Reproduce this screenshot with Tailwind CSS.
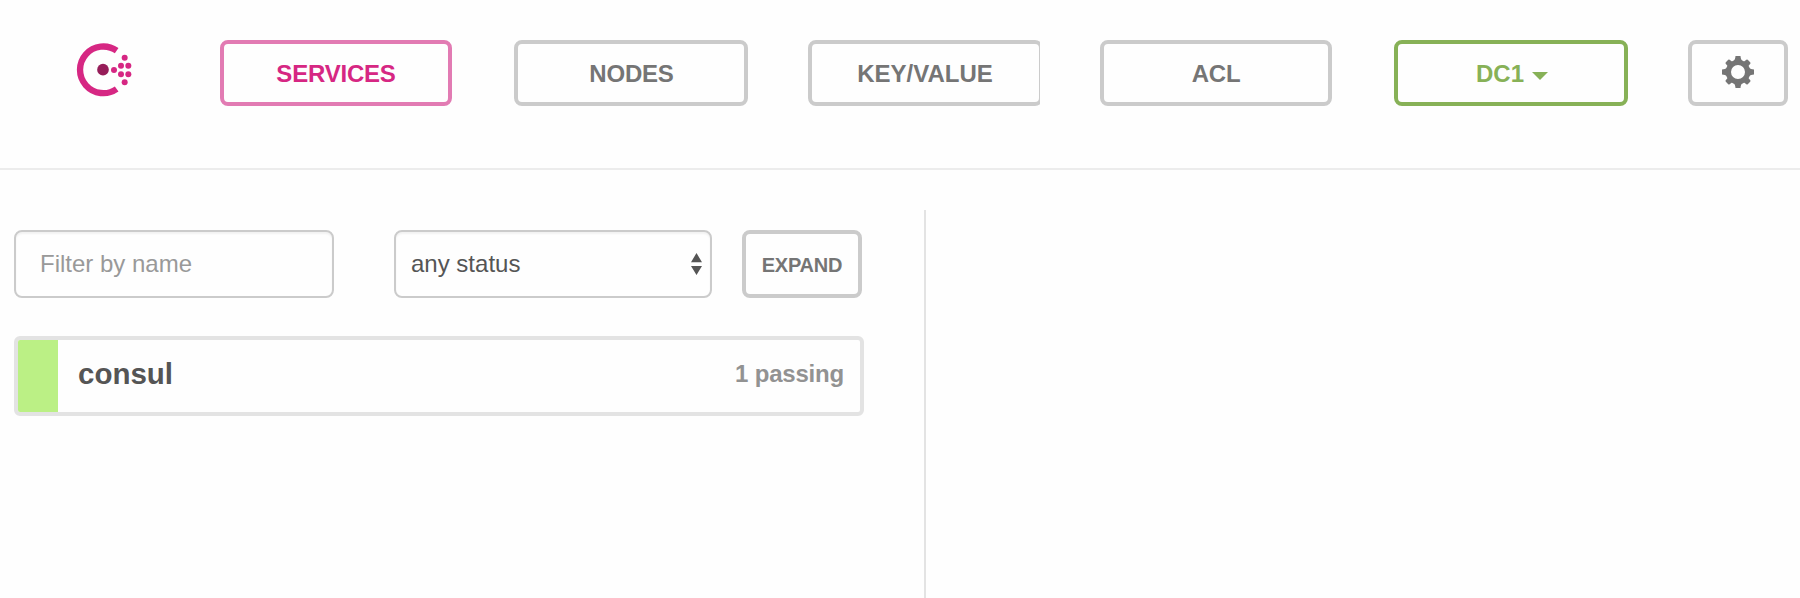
<!DOCTYPE html>
<html lang="en">
<head>
<meta charset="utf-8">
<title>Consul</title>
<script src="https://cdn.jsdelivr.net/npm/@tailwindcss/browser@4"></script>
</head>
<body class="h-[598px] overflow-hidden bg-[#fefefe] font-['Liberation_Sans',Arial,sans-serif] text-2xl text-[#555]">
<header class="flex h-[170px] items-start border-b-2 border-[#ececec] pt-10 font-bold text-[#757575]">
  <svg class="ml-[60px] -mt-[10px] mr-[70px] h-20 w-[90px] shrink-0" viewBox="0 0 270 240">
    <path d="M171 62A70 70 0 1 0 171 177" fill="none" stroke="#d62783" stroke-width="19" transform="translate(-1 0)"/>
    <circle cx="129" cy="119" r="17.5" fill="#961d59"/>
    <g fill="#d62783"><circle cx="162" cy="120" r="9"/><circle cx="183" cy="107" r="9"/><circle cx="205" cy="107" r="9"/><circle cx="194" cy="83" r="9"/><circle cx="183" cy="133" r="9"/><circle cx="205" cy="133" r="9"/><circle cx="194" cy="157" r="9"/></g>
  </svg>
  <a class="flex h-[66px] w-[232px] shrink-0 items-center justify-center rounded-lg border-4 border-[#e27bb3] pt-0.5 tracking-[-0.2px] text-[#d62783]">SERVICES</a>
  <a class="ml-[62px] flex h-[66px] w-[234px] shrink-0 items-center justify-center rounded-lg border-4 border-[#cbcbcb] pt-0.5 pl-px tracking-[-0.2px]">NODES</a>
  <div class="ml-[60px] w-[232px] shrink-0 overflow-hidden">
    <a class="flex h-[66px] w-[235px] items-center justify-center rounded-lg border-4 border-[#cbcbcb] pt-0.5 pr-px">KEY/VALUE</a>
  </div>
  <a class="ml-[60px] flex h-[66px] w-[232px] shrink-0 items-center justify-center rounded-lg border-4 border-[#cbcbcb] pt-0.5 tracking-[-0.2px]">ACL</a>
  <a class="ml-[62px] flex h-[66px] w-[234px] shrink-0 items-center justify-center gap-2 rounded-lg border-4 border-[#87b157] pt-0.5 pl-0.5 text-[#87b157]">DC1
    <svg class="mt-1 h-2 w-4" viewBox="0 0 16 8" fill="currentColor"><path d="M0 0H16L8 8Z"/></svg>
  </a>
  <a class="ml-[60px] flex h-[66px] w-[100px] shrink-0 items-start justify-center rounded-lg border-4 border-[#cbcbcb] pt-3">
    <svg class="h-8 w-8" viewBox="-16 -16 32 32" fill="#757575">
      <circle r="9.6" fill="none" stroke="#757575" stroke-width="5.2"/>
      <path id="t" d="M-5-10.5C-3-12-2.7-14-2.5-16H2.5C2.7-14 3-12 5-10.5Z"/>
      <use href="#t" transform="rotate(90)"/><use href="#t" transform="rotate(180)"/><use href="#t" transform="rotate(270)"/>
      <path id="d" d="M-3.2-10.5L-2.8-14.6Q-2.6-15.5-1.7-15.5H1.7Q2.6-15.5 2.8-14.6L3.2-10.5Z" transform="rotate(45)"/>
      <use href="#d" transform="rotate(90)"/><use href="#d" transform="rotate(180)"/><use href="#d" transform="rotate(270)"/>
    </svg>
  </a>
</header>
<main class="flex h-[388px] mt-10">
  <section class="w-[926px] shrink-0 border-r-2 border-[#e3e3e3] pl-[14px] pt-5">
    <div class="flex">
      <input type="text" placeholder="Filter by name" class="h-[68px] w-[320px] rounded-lg border-2 border-[#cbcbcb] px-6 shadow-[inset_0_2px_2px_#0000000d] placeholder:text-[#999]">
      <div class="ml-[60px] flex h-[68px] w-[318px] items-center justify-between rounded-lg border-2 border-[#cbcbcb] pl-[15px] pr-2 shadow-[inset_0_2px_2px_#0000000d]">any status
        <svg class="h-[22px] w-[11px]" viewBox="0 0 11 22" fill="#555"><path d="M0 9.3H11L5.5 0ZM0 13H11L5.5 22Z"/></svg>
      </div>
      <button class="ml-[30px] h-[68px] w-[120px] rounded-lg border-4 border-[#cbcbcb] pt-0.5 text-xl font-bold tracking-[-0.2px] text-[#757575]">EXPAND</button>
    </div>
    <div class="mt-[38px] flex h-20 w-[850px] items-center overflow-hidden rounded-md border-4 border-[#e3e3e3] pr-4 font-bold">
      <div class="h-full w-10 bg-[#bbf085]"></div>
      <h5 class="ml-5 -mt-1 text-[29.5px]">consul</h5>
      <span class="-mt-1 ml-auto tracking-[-0.2px] text-[#929292]">1 passing</span>
    </div>
  </section>
</main>
</body>
</html>
